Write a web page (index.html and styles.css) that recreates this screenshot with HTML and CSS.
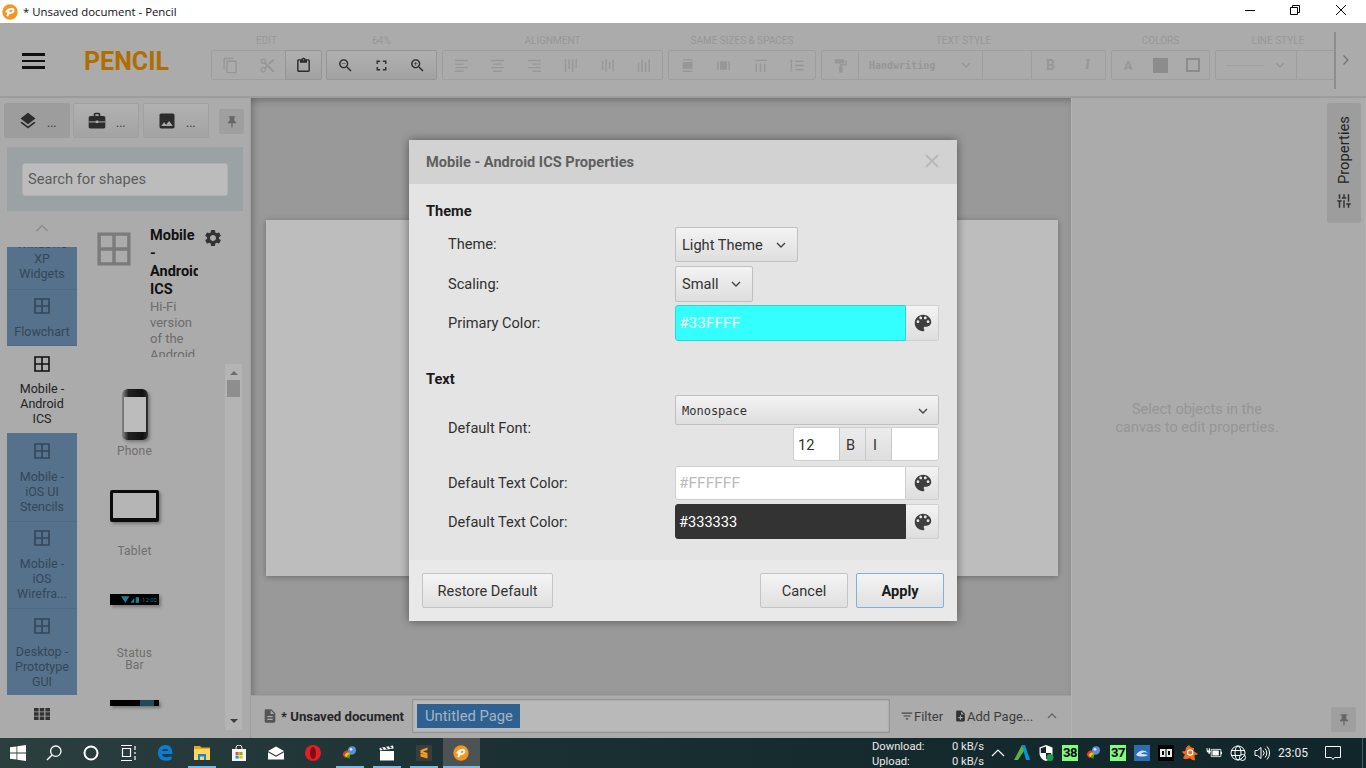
FILE: index.html
```html
<!DOCTYPE html>
<html lang="en">
<head>
<meta charset="utf-8">
<title>Pencil</title>
<link rel="stylesheet" href="styles.css">
</head>
<body>
<svg class="sprite" aria-hidden="true">
  <symbol id="i-copy" viewBox="0 0 24 24"><path d="M16 1H4c-1.1 0-2 .9-2 2v14h2V3h12V1zm3 4H8c-1.1 0-2 .9-2 2v14c0 1.1.9 2 2 2h11c1.1 0 2-.9 2-2V7c0-1.1-.9-2-2-2zm0 16H8V7h11v14z"/></symbol>
  <symbol id="i-cut" viewBox="0 0 24 24"><path d="M9.64 7.64c.23-.5.36-1.05.36-1.64 0-2.21-1.79-4-4-4S2 3.79 2 6s1.79 4 4 4c.59 0 1.14-.13 1.64-.36L10 12l-2.36 2.36C7.14 14.13 6.59 14 6 14c-2.21 0-4 1.79-4 4s1.79 4 4 4 4-1.79 4-4c0-.59-.13-1.14-.36-1.64L12 14l7 7h3v-1L9.64 7.64zM6 8c-1.1 0-2-.89-2-2s.9-2 2-2 2 .89 2 2-.9 2-2 2zm0 12c-1.1 0-2-.89-2-2s.9-2 2-2 2 .89 2 2-.9 2-2 2zm6-7.5c-.28 0-.5-.22-.5-.5s.22-.5.5-.5.5.22.5.5-.22.5-.5.5zM19 3l-6 6 2 2 7-7V3z"/></symbol>
  <symbol id="i-paste" viewBox="0 0 24 24"><path d="M19 3h-4.18C14.4 1.84 13.3 1 12 1c-1.3 0-2.4.84-2.82 2H5c-1.1 0-2 .9-2 2v14c0 1.1.9 2 2 2h14c1.1 0 2-.9 2-2V5c0-1.1-.9-2-2-2zm-7 0c.55 0 1 .45 1 1s-.45 1-1 1-1-.45-1-1 .45-1 1-1zm7 16H5V5h2v3h10V5h2v14z"/></symbol>
  <symbol id="i-zoomout" viewBox="0 0 24 24"><path d="M15.5 14h-.79l-.28-.27C15.41 12.59 16 11.11 16 9.5 16 5.91 13.09 3 9.5 3S3 5.91 3 9.5 5.91 16 9.5 16c1.61 0 3.09-.59 4.23-1.57l.27.28v.79l5 4.99L20.49 19l-4.99-5zm-6 0C7.01 14 5 11.99 5 9.5S7.01 5 9.5 5 14 7.01 14 9.5 11.99 14 9.5 14zM7 9h5v1H7z"/></symbol>
  <symbol id="i-zoomin" viewBox="0 0 24 24"><path d="M15.5 14h-.79l-.28-.27C15.41 12.59 16 11.11 16 9.5 16 5.91 13.09 3 9.5 3S3 5.91 3 9.5 5.91 16 9.5 16c1.61 0 3.09-.59 4.23-1.57l.27.28v.79l5 4.99L20.49 19l-4.99-5zm-6 0C7.01 14 5 11.99 5 9.5S7.01 5 9.5 5 14 7.01 14 9.5 11.99 14 9.5 14zM12 10h-2v2H9v-2H7V9h2V7h1v2h2v1z"/></symbol>
  <symbol id="i-fit" viewBox="0 0 24 24"><path d="M7 14H5v5h5v-2H7v-3zm-2-4h2V7h3V5H5v5zm12 7h-3v2h5v-5h-2v3zM14 5v2h3v3h2V5h-5z"/></symbol>
  <symbol id="i-layers" viewBox="0 0 24 24"><path d="M11.99 18.54l-7.37-5.73L3 14.07l9 7 9-7-1.63-1.27-7.38 5.74zM12 16l7.36-5.73L21 9l-9-7-9 7 1.63 1.27L12 16z"/></symbol>
  <symbol id="i-work" viewBox="0 0 24 24"><path d="M20 6h-4V4c0-1.11-.89-2-2-2h-4c-1.11 0-2 .89-2 2v2H4c-1.11 0-1.99.89-1.99 2L2 19c0 1.11.89 2 2 2h16c1.11 0 2-.89 2-2V8c0-1.11-.89-2-2-2zm-6 0h-4V4h4v2z"/><path d="M2 12.500h20v1.200H2z" fill="#b0b0b0"/><path d="M10.500 11.500h3v3h-3z" fill="#b0b0b0"/></symbol>
  <symbol id="i-image" viewBox="0 0 24 24"><path d="M21 19V5c0-1.100-.9-2-2-2H5c-1.100 0-2 .9-2 2v14c0 1.100.9 2 2 2h14c1.100 0 2-.9 2-2zM8.500 13.500l2.500 3.010L14.500 12l4.500 6H5l3.500-4.500z"/></symbol>
  <symbol id="i-pin" viewBox="0 0 24 24"><path d="M16 9V4h1c.55 0 1-.45 1-1s-.45-1-1-1H7c-.55 0-1 .45-1 1s.45 1 1 1h1v5c0 1.66-1.34 3-3 3v2h5.970v7l1 1 1-1v-7H19v-2c-1.660 0-3-1.340-3-3z"/></symbol>
  <symbol id="i-gear" viewBox="0 0 24 24"><path d="M19.14 12.94c.04-.3.06-.61.06-.94 0-.32-.02-.64-.07-.94l2.03-1.58c.18-.14.23-.41.12-.61l-1.92-3.32c-.12-.22-.37-.29-.59-.22l-2.39.96c-.5-.38-1.03-.7-1.62-.94l-.36-2.54c-.04-.24-.24-.41-.48-.41h-3.84c-.24 0-.43.17-.47.41l-.36 2.54c-.59.24-1.13.57-1.62.94l-2.39-.96c-.22-.08-.47 0-.59.22L2.74 8.87c-.12.21-.08.47.12.61l2.03 1.58c-.05.3-.09.63-.09.94s.02.64.07.94l-2.03 1.58c-.18.14-.23.41-.12.61l1.92 3.32c.12.22.37.29.59.22l2.39-.96c.5.38 1.03.7 1.62.94l.36 2.54c.05.24.24.41.48.41h3.84c.24 0 .44-.17.47-.41l.36-2.54c.59-.24 1.13-.56 1.62-.94l2.39.96c.22.08.47 0 .59-.22l1.92-3.32c.12-.22.07-.47-.12-.61l-2.01-1.58zM12 15.6c-1.98 0-3.6-1.62-3.6-3.6s1.62-3.6 3.6-3.6 3.6 1.62 3.6 3.6-1.62 3.6-3.6 3.6z"/></symbol>
  <symbol id="i-palette" viewBox="0 0 24 24"><path d="M12 3c-4.97 0-9 4.03-9 9s4.03 9 9 9c.83 0 1.5-.67 1.5-1.5 0-.39-.15-.74-.39-1.01-.23-.26-.38-.61-.38-.99 0-.83.67-1.5 1.5-1.5H16c2.76 0 5-2.24 5-5 0-4.42-4.03-8-9-8zm-5.500 9c-.83 0-1.5-.67-1.5-1.5S5.670 9 6.500 9 8 9.670 8 10.500 7.330 12 6.500 12zm3-4C8.670 8 8 7.330 8 6.500S8.670 5 9.500 5s1.500.67 1.500 1.500S10.330 8 9.500 8zm5 0c-.83 0-1.500-.67-1.500-1.500S13.670 5 14.500 5s1.500.67 1.500 1.500S15.330 8 14.500 8zm3 4c-.83 0-1.500-.67-1.500-1.500S16.670 9 17.500 9s1.500.67 1.500 1.500-.67 1.500-1.500 1.500z"/></symbol>
  <symbol id="i-tune" viewBox="0 0 24 24"><path d="M3 17v2h6v-2H3zM3 5v2h10V5H3zm10 16v-2h8v-2h-8v-2h-2v6h2zM7 9v2H3v2h4v2h2V9H7zm14 4v-2H11v2h10zm-6-4h2V7h4V5h-4V3h-2v6z"/></symbol>
  <symbol id="i-doc" viewBox="0 0 24 24"><path d="M14 2H6c-1.100 0-1.990.9-1.990 2L4 20c0 1.100.89 2 1.990 2H18c1.100 0 2-.9 2-2V8l-6-6zm2 16H8v-2h8v2zm0-4H8v-2h8v2zm-3-5V3.500L18.500 9H13z"/></symbol>
  <symbol id="i-addpage" viewBox="0 0 24 24"><path d="M14 2H6c-1.100 0-1.990.9-1.990 2L4 20c0 1.100.89 2 1.990 2H18c1.100 0 2-.9 2-2V8l-6-6zm2 14h-3v3h-2v-3H8v-2h3v-3h2v3h3v2zm-3-7V3.500L18.500 9H13z"/></symbol>
  <symbol id="i-filter" viewBox="0 0 24 24"><path d="M10 18h4v-2h-4v2zM3 6v2h18V6H3zm3 7h12v-2H6v2z"/></symbol>
  <symbol id="i-chev" viewBox="0 0 12 12"><path d="M2 4l4 4 4-4" fill="none" stroke="currentColor" stroke-width="1.400"/></symbol>
  <symbol id="i-cat" viewBox="0 0 16 16"><path d="M1 1h14v14H1zM8 1v14M1 8h14" fill="none" stroke="currentColor" stroke-width="1.600"/></symbol>
  <symbol id="i-left" viewBox="0 0 24 24"><path d="M3 4h18v2H3zM3 9h12v2H3zM3 14h18v2H3zM3 19h12v2H3z"/></symbol>
  <symbol id="i-center" viewBox="0 0 24 24"><path d="M3 4h18v2H3zM6 9h12v2H6zM3 14h18v2H3zM6 19h12v2H6z"/></symbol>
  <symbol id="i-right" viewBox="0 0 24 24"><path d="M3 4h18v2H3zM9 9h12v2H9zM3 14h18v2H3zM9 19h12v2H9z"/></symbol>
  <symbol id="i-vt" viewBox="0 0 24 24"><path d="M4 3h2v18H4zM9 3h2v14H9zM14 3h2v18h-2zM19 3h2v13h-2z"/></symbol>
  <symbol id="i-vm" viewBox="0 0 24 24"><path d="M4 6h2v12H4zM9 3h2v18H9zM14 7h2v10h-2zM19 4h2v16h-2z"/></symbol>
  <symbol id="i-vb" viewBox="0 0 24 24"><path d="M4 8h2v13H4zM9 3h2v18H9zM14 7h2v14h-2zM19 3h2v18h-2z"/></symbol>
  <symbol id="i-samew" viewBox="0 0 24 24"><path d="M5 3h14v2H5zM5 7h14v10H5zM5 19h14v2H5z"/></symbol>
  <symbol id="i-sameh" viewBox="0 0 24 24"><path d="M3 6h2v12H3zM7 6h10v12H7zM19 6h2v12h-2z"/></symbol>
  <symbol id="i-hspace" viewBox="0 0 24 24"><path d="M3 4h18v1.600H3zM5 9h2v12H5zM11 9h2v12h-2zM17 9h2v12h-2zM5 3l-2 1.800L5 6.600zM19 3l2 1.800-2 1.800z"/></symbol>
  <symbol id="i-vspace" viewBox="0 0 24 24"><path d="M4 5h1.600v14H4zM2.500 6l2.300-3 2.300 3zM2.500 18l2.300 3 2.300-3zM10 5h12v2H10zM10 11h12v2H10zM10 17h12v2H10z"/></symbol>
  <symbol id="i-roller" viewBox="0 0 24 24"><path d="M4 3h13v6H4zM18 5h3v7h-8v2h2v8h-5v-8h1v-4h8V7h-1z"/></symbol>
  <symbol id="i-apps" viewBox="0 0 16 12"><path d="M0 0h4.600v3.400H0zM5.700 0h4.600v3.400H5.700zM11.400 0H16v3.400h-4.600zM0 4.300h4.600v3.400H0zM5.700 4.300h4.600v3.400H5.700zM11.400 4.300H16v3.400h-4.600zM0 8.600h4.600V12H0zM5.700 8.600h4.600V12H5.700zM11.400 8.600H16V12h-4.600z"/></symbol>
  <symbol id="i-pencil" viewBox="0 0 24 24"><circle cx="12" cy="12" r="11.500" fill="#f7941d"/><path d="M6 12.500C8 8 15 5.500 17 8.500c1.500 2.500-2.500 6-7 5M10.500 9.500L8 18.500" fill="none" stroke="#fff" stroke-width="3"/></symbol>
  <symbol id="i-idm" viewBox="0 0 24 24"><path d="M1 15c1-5 4-7 8-7l1 6-5 6z" fill="#e23b2e"/><path d="M4 16c1-4 3-5 7-5l2 3-5 5z" fill="#f5c400"/><path d="M7 17c2-3 6-4 11-3l-6 1-1 6z" fill="#3da935"/><circle cx="15" cy="8" r="6" fill="#5b8fd8"/><circle cx="13.500" cy="6.500" r="2" fill="#dce9f8"/></symbol>
</svg>

<div class="titlebar">
  <svg class="title-logo"><use href="#i-pencil"/></svg>
  <span class="title-text">* Unsaved document - Pencil</span>
  <div class="win-controls">
    <svg class="win-btn" viewBox="0 0 46 23"><path d="M20 10.500h10" stroke="#000" stroke-width="1"/></svg>
    <svg class="win-btn" viewBox="0 0 46 23"><path d="M19.500 7.500h7v7h-7zM21.500 7.500v-2h7v7h-2" fill="none" stroke="#000"/></svg>
    <svg class="win-btn" viewBox="0 0 46 23"><path d="M19 5l10 10M29 5l-10 10" stroke="#000" stroke-width="1"/></svg>
  </div>
</div>

<div class="app">
  <header class="toolbar">
    <div class="brand">
      <div class="burger"><i></i><i></i><i></i></div>
      <div class="logo-word">PENCIL</div>
    </div>
    <div class="tool-scroll">
      <section class="tg w110">
        <div class="tg-label">EDIT</div>
        <div class="tg-cells">
          <div class="cell"><svg class="ic"><use href="#i-copy"/></svg></div>
          <div class="cell"><svg class="ic"><use href="#i-cut"/></svg></div>
          <div class="cell cell-on"><svg class="ic"><use href="#i-paste"/></svg></div>
        </div>
      </section>
      <section class="tg w111">
        <div class="tg-label">64%</div>
        <div class="tg-cells on">
          <div class="cell"><svg class="ic"><use href="#i-zoomout"/></svg></div>
          <div class="cell"><svg class="ic"><use href="#i-fit"/></svg></div>
          <div class="cell"><svg class="ic"><use href="#i-zoomin"/></svg></div>
        </div>
      </section>
      <section class="tg w221">
        <div class="tg-label">ALIGNMENT</div>
        <div class="tg-cells">
          <div class="cell"><svg class="ic"><use href="#i-left"/></svg></div>
          <div class="cell"><svg class="ic"><use href="#i-center"/></svg></div>
          <div class="cell"><svg class="ic"><use href="#i-right"/></svg></div>
          <div class="cell"><svg class="ic"><use href="#i-vt"/></svg></div>
          <div class="cell"><svg class="ic"><use href="#i-vm"/></svg></div>
          <div class="cell"><svg class="ic"><use href="#i-vb"/></svg></div>
        </div>
      </section>
      <section class="tg w148">
        <div class="tg-label">SAME SIZES &amp; SPACES</div>
        <div class="tg-cells">
          <div class="cell"><svg class="ic"><use href="#i-samew"/></svg></div>
          <div class="cell"><svg class="ic"><use href="#i-sameh"/></svg></div>
          <div class="cell"><svg class="ic"><use href="#i-hspace"/></svg></div>
          <div class="cell"><svg class="ic"><use href="#i-vspace"/></svg></div>
        </div>
      </section>
      <section class="tg w285">
        <div class="tg-label">TEXT STYLE</div>
        <div class="tg-cells">
          <div class="cell fix37 div-r"><svg class="ic"><use href="#i-roller"/></svg></div>
          <div class="cell fix124 div-r font-pick"><span class="hand">Handwriting</span><svg class="chev"><use href="#i-chev"/></svg></div>
          <div class="cell fix49 div-r"></div>
          <div class="cell fix37 glyph-b">B</div>
          <div class="cell fix37 glyph-i">I</div>
        </div>
      </section>
      <section class="tg w99">
        <div class="tg-label">COLORS</div>
        <div class="tg-cells">
          <div class="cell glyph-a">A</div>
          <div class="cell"><span class="fill-sq"></span></div>
          <div class="cell"><span class="line-sq"></span></div>
        </div>
      </section>
      <section class="tg w130">
        <div class="tg-label label-line">LINE STYLE</div>
        <div class="tg-cells">
          <div class="cell fix81 div-r line-pick"><span class="line-sample"></span><svg class="chev"><use href="#i-chev"/></svg></div>
          <div class="cell"></div>
        </div>
      </section>
    </div>
    <div class="tool-more"><svg class="more-chev" viewBox="0 0 10 12"><path d="M2.500 1.500l4.500 4.500-4.500 4.500" fill="none" stroke="#707070" stroke-width="1.200"/></svg></div>
  </header>

  <div class="workspace">
    <aside class="left">
      <div class="left-tabs">
        <div class="ltab ltab-on"><svg class="ltab-ic"><use href="#i-layers"/></svg><span>...</span></div>
        <div class="ltab"><svg class="ltab-ic"><use href="#i-work"/></svg><span>...</span></div>
        <div class="ltab ltab3"><svg class="ltab-ic"><use href="#i-image"/></svg><span>...</span></div>
        <div class="pin-btn"><svg class="pin-ic"><use href="#i-pin"/></svg></div>
      </div>
      <div class="search-wrap"><div class="search-box">Search for shapes</div></div>
      <div class="collections">
        <div class="cat-col">
          <div class="cat-up"><svg class="cat-up-ic" viewBox="0 0 14 8"><path d="M1.500 7l5.500-5.500 5.500 5.500" fill="none" stroke="#8a8a8a" stroke-width="1.200"/></svg></div>
          <div class="cat-list">
            <div class="cat cat-clip">Windows<br>XP<br>Widgets</div>
            <div class="cat cat-flow"><svg class="cat-ic"><use href="#i-cat"/></svg><span>Flowchart</span></div>
            <div class="cat cat-sel"><svg class="cat-ic"><use href="#i-cat"/></svg><span>Mobile -<br>Android<br>ICS</span></div>
            <div class="cat cat-ios"><svg class="cat-ic"><use href="#i-cat"/></svg><span>Mobile -<br>iOS UI<br>Stencils</span></div>
            <div class="cat cat-wire"><svg class="cat-ic"><use href="#i-cat"/></svg><span>Mobile -<br>iOS<br>Wirefra...</span></div>
            <div class="cat cat-desk"><svg class="cat-ic"><use href="#i-cat"/></svg><span>Desktop -<br>Prototype<br>GUI</span></div>
          </div>
          <div class="cat-foot"><svg class="apps-ic"><use href="#i-apps"/></svg></div>
        </div>
        <div class="shape-col">
          <div class="col-head">
            <svg class="head-ic"><use href="#i-cat"/></svg>
            <div class="head-text">
              <div class="head-title">Mobile - Android ICS</div>
              <div class="head-desc">Hi-Fi version of the Android ICS</div>
            </div>
            <svg class="gear"><use href="#i-gear"/></svg>
          </div>
          <div class="shapes">
            <div class="shape-list">
              <div class="shape s-phone"><div class="phone"><div class="phone-screen"></div></div><div class="shape-name">Phone</div></div>
              <div class="shape s-tablet"><div class="tablet"></div><div class="shape-name">Tablet</div></div>
              <div class="shape s-status">
                <div class="statusbar">
                  <svg class="sb-icons" viewBox="0 0 20 7"><path fill="#1f7f92" d="M0 0h9L4.500 7zM10 7l4-5v5zM15.500 1H19v6h-3.500z"/></svg>
                  <span class="sb-time">12:00</span>
                </div>
                <div class="shape-name">Status<br>Bar</div>
              </div>
              <div class="shape s-nav"><div class="navbar"><span class="nav-seg"></span></div></div>
            </div>
            <div class="scrollbar">
              <span class="sb-up"></span>
              <span class="sb-thumb"></span>
              <span class="sb-down"></span>
            </div>
          </div>
        </div>
      </div>
    </aside>

    <main class="center">
      <div class="canvas-area"><div class="page"></div></div>
      <div class="page-bar">
        <svg class="doc-ic"><use href="#i-doc"/></svg>
        <span class="doc-name">* Unsaved document</span>
        <div class="page-tabs"><span class="page-tab">Untitled Page</span></div>
        <div class="page-act filter"><svg class="act-ic"><use href="#i-filter"/></svg>Filter</div>
        <div class="page-act addp"><svg class="act-ic2"><use href="#i-addpage"/></svg>Add Page...</div>
        <svg class="bar-chev" viewBox="0 0 12 8"><path d="M2 6l4-4 4 4" fill="none" stroke="#666" stroke-width="1.300"/></svg>
      </div>
    </main>

    <aside class="right">
      <div class="right-main"><p class="right-msg">Select objects in the canvas to edit properties.</p></div>
      <div class="right-rail">
        <div class="prop-tab"><span class="prop-text">Properties</span><svg class="tune"><use href="#i-tune"/></svg></div>
        <div class="pin-btn pin-rail"><svg class="pin-ic"><use href="#i-pin"/></svg></div>
      </div>
    </aside>
  </div>
</div>

<footer class="taskbar">
  <div class="tb-apps">
    <div class="tb first"><svg class="tb-ic" viewBox="0 0 16 16"><path fill="#fff" d="M0 2.300l6.500-.9v6.200H0zM7.300 1.300L16 0v7.600H7.300zM0 8.400h6.500v6.200L0 13.700zM7.300 8.400H16V16l-8.700-1.200z"/></svg></div>
    <div class="tb"><svg class="tb-ic" viewBox="0 0 16 16"><circle cx="9.800" cy="6.200" r="5.200" fill="none" stroke="#fff" stroke-width="1.300"/><path d="M6 10L1 15" stroke="#fff" stroke-width="1.500"/></svg></div>
    <div class="tb"><svg class="tb-ic" viewBox="0 0 16 16"><circle cx="8" cy="8" r="6.500" fill="none" stroke="#fff" stroke-width="2"/></svg></div>
    <div class="tb"><svg class="tb-ic" viewBox="0 0 16 16"><path d="M1 .5h11M1 15.500h11M2.500 3.500h8v8h-8zM15 1v4M15 7v2M15 11v4" fill="none" stroke="#fff" stroke-width="1.200"/></svg></div>
    <div class="tb"><svg class="tb-ic" viewBox="0 0 16 16"><path fill="#0c7cd5" d="M1 8c0-5 3-8 7.500-8C13 0 15.500 3 15.500 9H5c.2 3.500 5 4.200 9.500 2v3.500C9 17 1 16 1 8zm4-2h6.300C11 3 6 3 5 6z"/></svg></div>
    <div class="tb act"><svg class="tb-ic" viewBox="0 0 16 16"><path fill="#e8a917" d="M0 1h6l1.500 1.500H16V5H0z"/><path fill="#ffd767" d="M0 4h16v11H0z"/><path fill="#1a86c9" d="M4 9h8v6h-2v-3.500H6V15H4z"/></svg></div>
    <div class="tb"><svg class="tb-ic" viewBox="0 0 16 16"><path fill="#f4f4f4" d="M1 4h14v12H1z"/><path d="M5 5V3a3 3 0 016 0v2" fill="none" stroke="#f4f4f4"/><path fill="#f25022" d="M4.500 7H7.700v3H4.500z"/><path fill="#7fba00" d="M8.300 7h3.200v3H8.300z"/><path fill="#00a4ef" d="M4.500 10.600H7.700v3H4.500z"/><path fill="#ffb900" d="M8.300 10.600h3.200v3H8.300z"/></svg></div>
    <div class="tb"><svg class="tb-ic" viewBox="0 0 16 16"><path fill="#fff" d="M0 6l8-4.500L16 6 8 10.500zM0 7.300l8 4.500 8-4.500V14.500H0z"/></svg></div>
    <div class="tb"><svg class="tb-ic" viewBox="0 0 16 16"><ellipse cx="8" cy="8" rx="8" ry="8" fill="#e21f26"/><ellipse cx="8" cy="8" rx="3" ry="6" fill="#7c0f14"/></svg></div>
    <div class="tb act"><svg class="tb-ic"><use href="#i-idm"/></svg></div>
    <div class="tb act"><svg class="tb-ic" viewBox="0 0 16 16"><path fill="#fff" d="M1 6h14v9.500H1z"/><path fill="#fff" d="M.5 3L14 .5l.6 3L1 5.500z"/><path fill="#223" d="M3 2.500l2 2-1.500.3-2-2zM7 1.800l2 2-1.500.3-2-2zM11 1.100l2 2-1.500.3-2-2z"/></svg></div>
    <div class="tb act"><svg class="tb-ic" viewBox="0 0 16 16"><rect width="16" height="16" fill="#3c3c3c"/><path fill="#f89c1c" d="M11.500 2.500L4.500 5v3l7 2.500V8l-4.500-1.500 4.500-1.500zM4.500 8.500v3l7 2v-3z"/></svg></div>
    <div class="tb act current"><svg class="tb-ic"><use href="#i-pencil"/></svg></div>
  </div>
  <div class="netstat">
    <div class="net-row"><span>Download:</span><span>0 kB/s</span></div>
    <div class="net-row"><span>Upload:</span><span>0 kB/s</span></div>
  </div>
  <div class="tray">
    <div class="tr"><svg class="tr-ic" viewBox="0 0 16 16"><path d="M2 11l6-6 6 6" fill="none" stroke="#fff" stroke-width="1.200"/></svg></div>
    <div class="tr"><svg class="tr-ic" viewBox="0 0 16 16"><path fill="#0696d7" d="M8 0h3l5 15h-4z"/><path fill="#5bae4a" d="M8 0L0 15h4l6-9z"/></svg></div>
    <div class="tr"><svg class="tr-ic" viewBox="0 0 16 16"><path fill="#fff" d="M8 0l6.500 2.500V8c0 4-3 7-6.500 8C4.500 15 1.500 12 1.500 8V2.500z"/><path fill="#18222a" d="M8 1.500V8H2.800V3.300zM8 8h5.200c0 3-2.200 5.300-5.200 6.300z"/><circle cx="12" cy="12.500" r="3.500" fill="#1f9b4f"/></svg></div>
    <div class="tr"><span class="num">38</span></div>
    <div class="tr"><svg class="tr-ic"><use href="#i-idm"/></svg></div>
    <div class="tr"><span class="num">37</span></div>
    <div class="tr"><svg class="tr-ic" viewBox="0 0 16 16"><rect width="16" height="16" fill="#2d6cb0"/><path d="M2 10c3-5 8-6 12-2-3-1-5-1-7 1 3 0 5 0 7 1-3 2-9 2-12 0z" fill="#cfe2f5"/></svg></div>
    <div class="tr"><svg class="tr-ic" viewBox="0 0 16 16"><rect width="16" height="16" fill="#000"/><path fill="#e8e8e8" d="M2 4h5.500v8H2zM8.500 4H14v8H8.500z"/><path fill="#000" d="M4 6h2v4H4zM10 6h2v4h-2z"/></svg></div>
    <div class="tr"><svg class="tr-ic" viewBox="0 0 16 16"><path fill="#f26a1b" d="M7 0c1 2 3 3 5 3 0 1 0 2-.5 3L16 9c-1 1-2.500 1-3.500 1L13 15c-2 1-4-.5-5-2-1.500 1-5 2-7 0l2-3.500C2 9 .5 8 0 6.500L3.500 6C3 3 5 1 7 0z"/><circle cx="8.200" cy="7.500" r="2.600" fill="none" stroke="#fff" stroke-width="1.200"/></svg></div>
    <div class="tr"><svg class="tr-ic" viewBox="0 0 20 16"><path d="M6.500 3.500h12v9h-12z" fill="none" stroke="#fff"/><path fill="#fff" d="M8 5h8v6H8zM.5 2h1.500v3h1.500V2H5v3l1 1v1H5v2H3V7H1V5.500zM18.500 6.500h1.500v3h-1.500z"/></svg></div>
    <div class="tr"><svg class="tr-ic" viewBox="0 0 16 16"><circle cx="8" cy="8" r="7" fill="none" stroke="#fff"/><ellipse cx="8" cy="8" rx="3" ry="7" fill="none" stroke="#fff"/><path d="M1 5.500h14M1 10.500h14" stroke="#fff"/><circle cx="12.500" cy="12.500" r="3" fill="#1a2e30" stroke="#fff"/><path d="M10.500 14.500l4-4" stroke="#fff"/></svg></div>
    <div class="tr"><svg class="tr-ic" viewBox="0 0 16 16"><path d="M1 5.500h2.500L7 2.500v11l-3.500-3H1z" fill="none" stroke="#fff"/><path d="M9 5.500a3.500 3.500 0 010 5M11 3.500a6.500 6.500 0 010 9M13 1.500a9.500 9.500 0 010 13" fill="none" stroke="#fff"/></svg></div>
    <div class="clock">23:05</div>
    <div class="notif"><svg class="notif-ic" viewBox="0 0 16 16"><path d="M.5 1.500h15v11H9.500l-1.500 2-1.500-2h-6z" fill="none" stroke="#fff"/></svg></div>
    <div class="show-desk"></div>
  </div>
</footer>

<div class="dialog">
  <div class="dlg-head">
    <span class="dlg-title">Mobile - Android ICS Properties</span>
    <svg class="dlg-close" viewBox="0 0 14 14"><path d="M1 1l12 12M13 1L1 13" stroke="#b8b8b8" stroke-width="2"/></svg>
  </div>
  <div class="dlg-body">
    <h3 class="sec">Theme</h3>
    <div class="row r-theme"><label>Theme:</label><div class="select s123"><span>Light Theme</span><svg class="chev-d"><use href="#i-chev"/></svg></div></div>
    <div class="row r-scale"><label>Scaling:</label><div class="select s78"><span>Small</span><svg class="chev-d"><use href="#i-chev"/></svg></div></div>
    <div class="row r-prim"><label>Primary Color:</label>
      <div class="color"><div class="color-val c-cyan">#33FFFF</div><div class="color-btn"><svg class="pal"><use href="#i-palette"/></svg></div></div>
    </div>
    <h3 class="sec sec2">Text</h3>
    <div class="row r-font"><label>Default Font:</label>
      <div class="font-ctl">
        <div class="select full mono"><span>Monospace</span><svg class="chev-d"><use href="#i-chev"/></svg></div>
        <div class="font-meta">
          <div class="fm-size">12</div>
          <div class="fm-btn fm-b">B</div>
          <div class="fm-btn fm-i">I</div>
          <div class="fm-blank"></div>
        </div>
      </div>
    </div>
    <div class="row r-c1"><label>Default Text Color:</label>
      <div class="color"><div class="color-val c-white">#FFFFFF</div><div class="color-btn"><svg class="pal"><use href="#i-palette"/></svg></div></div>
    </div>
    <div class="row r-c2"><label>Default Text Color:</label>
      <div class="color"><div class="color-val c-dark">#333333</div><div class="color-btn"><svg class="pal"><use href="#i-palette"/></svg></div></div>
    </div>
  </div>
  <div class="dlg-foot">
    <button class="btn b-restore">Restore Default</button>
    <span class="foot-gap"></span>
    <button class="btn b-cancel">Cancel</button>
    <button class="btn b-apply">Apply</button>
  </div>
</div>
</body>
</html>
```
FILE: styles.css
```css
* { box-sizing: border-box; }
html, body { margin: 0; padding: 0; width: 1366px; height: 768px; overflow: hidden; }
body { display: flex; flex-direction: column; font-family: Roboto, "Liberation Sans", sans-serif; color: #222; background: #ababab; position: relative; }
.sprite { display: none; }

.titlebar { height: 23px; flex: none; background: #fff; display: flex; align-items: center; }
.title-logo { width: 16px; height: 16px; margin-left: 2px; margin-right: 5px; }
.title-text { font: 11.400px "Open Sans", "Noto Sans", sans-serif; color: #111; }
.win-controls { margin-left: auto; margin-right: 3px; display: flex; }
.win-btn { width: 46px; height: 23px; }

.app { flex: 1; min-height: 0; display: flex; flex-direction: column; }
.toolbar { height: 75px; flex: none; background: #ababab; border-bottom: 2px solid #9c9c9c; display: flex; }
.brand { width: 211px; flex: none; display: flex; align-items: center; padding-top: 3px; }
.burger { width: 23px; margin-left: 22px; display: flex; flex-direction: column; gap: 4px; }
.burger i { display: block; height: 2.500px; background: #111; }
.logo-word { margin-left: 39px; font-size: 25px; font-weight: 700; color: #b06d00; }
.tool-scroll { width: 1124px; flex: none; display: flex; gap: 5px; overflow: hidden; }
.tg { flex: none; display: flex; flex-direction: column; padding-top: 12px; }
.w110 { width: 111px; margin-right: -1px; }
.w111 { width: 111px; }
.w221 { width: 221px; }
.w148 { width: 148px; }
.w285 { width: 285px; }
.w99 { width: 99px; }
.w130 { width: 130px; }
.tg-label { height: 12px; line-height: 12px; font-size: 10px; text-align: center; color: #979797; white-space: nowrap; }
.label-line { padding-right: 4px; }
.tg-cells { margin-top: 3px; height: 30px; display: flex; border: 1px solid #9e9e9e; border-radius: 2px; }
.tg-cells.on { background: linear-gradient(#b0b0b0, #a2a2a2); border-color: #959595; }
.tg-cells.on .ic { fill: #2e2e2e; }
.cell { flex: 1 1 0; min-width: 0; display: flex; align-items: center; justify-content: center; color: #979797; }
.cell-on { flex: 0 0 37px; border: 1px solid #959595; margin: -1px; background: linear-gradient(#b0b0b0, #a2a2a2); border-radius: 0 2px 2px 0; }
.cell-on .ic { fill: #2b2b2b; }
.ic { width: 17px; height: 17px; fill: #979797; }
.fix37 { flex: 0 0 37px; }
.fix49 { flex: 0 0 49px; }
.fix81 { flex: 0 0 81px; }
.fix124 { flex: 0 0 124px; }
.div-r { border-right: 1px solid #9e9e9e; }
.font-pick { justify-content: space-between; padding: 0 10px; }
.hand { font: bold 10px "DejaVu Sans Mono", monospace; color: #969696; }
.chev { width: 12px; height: 12px; color: #979797; }
.glyph-b { font-size: 14px; font-weight: 700; }
.glyph-i { font: italic 700 14px "Liberation Serif", serif; }
.glyph-a { font-size: 13px; font-weight: 700; }
.fill-sq { width: 15px; height: 15px; background: #8c8c8c; }
.line-sq { width: 14px; height: 14px; border: 2px solid #8c8c8c; }
.line-pick { justify-content: space-between; padding: 0 10px; }
.line-sample { width: 38px; height: 1px; background: #a0a0a0; }
.tool-more { flex: 1; position: relative; display: flex; align-items: center; justify-content: center; padding-right: 10px; }
.more-chev { width: 10px; height: 12px; }
.tool-more::before { content: ""; position: absolute; left: -1px; top: 9px; height: 57px; width: 2px; background: #8e8e8e; }

.workspace { flex: 1; min-height: 0; display: flex; }
.left { width: 251px; flex: none; background: #ababab; border-right: 1px solid #9f9f9f; display: flex; flex-direction: column; }
.left-tabs { height: 49px; flex: none; padding: 5px 0 0 4px; display: flex; gap: 3px; align-items: flex-start; }
.ltab { width: 66px; height: 35px; border: 1px solid #a0a0a0; border-radius: 2px; background: linear-gradient(#b1b1b1, #a3a3a3); display: flex; align-items: center; padding-left: 13px; font-size: 12px; color: #333; }
.ltab3 { margin-left: 1px; }
.ltab span { margin-left: 9px; margin-top: 4px; }
.ltab-ic { width: 20px; height: 20px; fill: #2c2c2c; }
.ltab-on { background: #9d9d9d; border-color: #9d9d9d; }
.pin-btn { width: 25px; height: 25px; background: #9f9f9f; border-radius: 2px; display: flex; align-items: center; justify-content: center; }
.left-tabs .pin-btn { margin: 6px 0 0 7px; }
.pin-ic { width: 14px; height: 16px; fill: #666; }
.search-wrap { margin: 0 7px; height: 64px; flex: none; background: #9aa2a4; padding: 16px 15px; }
.search-box { height: 33px; background: #bcbcbc; border: 1px solid #b0b0b0; border-radius: 3px; padding-left: 5px; font-size: 14.700px; line-height: 30px; color: #5c5c5c; }
.collections { flex: 1; min-height: 0; display: flex; }
.cat-col { width: 77px; flex: none; padding-left: 7px; display: flex; flex-direction: column; }
.cat-up { height: 36px; flex: none; display: flex; justify-content: center; padding-top: 13px; }
.cat-up-ic { width: 14px; height: 8px; }
.cat-list { flex: none; height: 448px; overflow: hidden; display: flex; flex-direction: column; }
.cat { flex: none; background: #56718b; color: #33475a; font-size: 12.500px; line-height: 15px; text-align: center; display: flex; flex-direction: column; align-items: center; justify-content: flex-end; white-space: nowrap; border-bottom: 1px solid #506a83; }
.cat-ic { width: 16px; height: 16px; color: #33475a; margin-bottom: 10px; }
.cat-clip { height: 43px; padding-bottom: 8px; }
.cat-flow { height: 56px; padding-bottom: 6px; }
.cat-sel { height: 87px; padding-bottom: 7px; background: #ababab; color: #222; border-bottom: 0; }
.cat-sel .cat-ic { color: #111; margin-bottom: 9px; }
.cat-ios { height: 89px; padding-bottom: 7px; }
.cat-wire { height: 87px; padding-bottom: 7px; }
.cat-desk { height: 86px; padding-bottom: 6px; border-bottom: 0; }
.cat-foot { flex: 1; display: flex; align-items: center; justify-content: center; padding-bottom: 5px; }
.apps-ic { width: 16px; height: 12px; fill: #333; }
.shape-col { flex: 1; min-width: 0; display: flex; flex-direction: column; }
.col-head { height: 146px; flex: none; position: relative; display: flex; padding: 10px 0 0 20px; overflow: hidden; }
.head-ic { width: 34px; height: 34px; color: #7b7b7b; flex: none; margin-top: 11px; }
.head-text { width: 48px; margin-left: 19px; height: 136px; overflow: hidden; }
.head-title { font-size: 14.500px; font-weight: 700; line-height: 18px; color: #111; height: 72px; margin-top: 6px; }
.head-desc { font-size: 13px; line-height: 16px; color: #6c6c6c; }
.gear { position: absolute; left: 126px; top: 17px; width: 20px; height: 20px; fill: #333; }
.shapes { flex: 1; min-height: 0; display: flex; padding: 7px 8px 8px 0; }
.shape-list { flex: 1; min-width: 0; height: 100%; overflow: hidden; padding-right: 33px; display: flex; flex-direction: column; }
.shape { display: flex; flex-direction: column; align-items: center; flex: none; }
.shape-name { font-size: 12px; line-height: 12px; color: #6e6e6e; text-align: center; letter-spacing: .2px; }
.s-phone { padding-top: 25px; }
.s-phone .shape-name { margin-top: 5px; }
.s-tablet { margin-top: 33px; }
.s-tablet .shape-name { margin-top: 23px; }
.s-status { margin-top: 37px; }
.s-status .shape-name { margin-top: 42px; }
.s-nav { margin-top: 29px; }
.phone { width: 26px; height: 51px; border-radius: 6px 6px 5px 5px; background: linear-gradient(90deg, #8a8a8a, #222 25%, #111 80%, #333); padding: 8px 2px 8px 2px; box-shadow: 2px 2px 3px rgba(0,0,0,.3); }
.phone-screen { height: 100%; background: #bcbcbc; }
.tablet { width: 49px; height: 32px; background: #b5b5b5; border: 3px solid #0b0b0b; border-bottom-width: 4px; border-radius: 2px; box-shadow: 2px 2px 3px rgba(0,0,0,.3); }
.statusbar { width: 49px; height: 11px; background: #000; display: flex; align-items: center; justify-content: flex-end; gap: 2px; padding-right: 2px; box-shadow: 2px 2px 3px rgba(0,0,0,.3); }
.sb-icons { width: 19px; height: 7px; }
.sb-time { font-size: 6px; line-height: 7px; color: #1e7385; }
.navbar { width: 49px; height: 6px; background: #000; display: flex; justify-content: flex-end; padding-right: 5px; box-shadow: 2px 2px 3px rgba(0,0,0,.3); }
.nav-seg { width: 14px; background: #1f4a5c; }
.scrollbar { width: 17px; flex: none; background: #b4b4b4; display: flex; flex-direction: column; align-items: center; }
.sb-up { width: 0; height: 0; margin-top: 7px; border: 4px solid transparent; border-top: 0; border-bottom: 4px solid #6d6d6d; }
.sb-thumb { width: 13px; height: 17px; background: #8e8e8e; margin-top: 5px; }
.sb-down { width: 0; height: 0; margin-top: auto; margin-bottom: 7px; border: 4px solid transparent; border-bottom: 0; border-top: 4px solid #3d3d3d; }

.center { width: 820px; flex: none; display: flex; flex-direction: column; min-height: 0; }
.canvas-area { flex: 1; min-height: 0; background: #999; box-shadow: inset 0 6px 8px -4px rgba(0,0,0,.25), inset 6px 0 8px -4px rgba(0,0,0,.2); padding: 122px 0 0 15px; }
.page { width: 792px; height: 356px; background: #bdbdbd; box-shadow: 0 1px 6px rgba(0,0,0,.3); }
.page-bar { height: 43px; flex: none; background: #ababab; border-top: 1px solid #a0a0a0; display: flex; align-items: center; padding-bottom: 2px; }
.doc-ic { width: 16px; height: 16px; fill: #555; margin-left: 11px; }
.doc-name { width: 123px; font-size: 13.200px; font-weight: 700; color: #262626; margin-left: 3px; white-space: nowrap; }
.page-tabs { width: 478px; height: 34px; margin-left: 8px; background: #b9b9b9; border: 1px solid #959595; padding: 4px; flex: none; display: flex; box-shadow: inset 0 0 2px rgba(0,0,0,.2); }
.page-tab { background: #2f6190; color: #a4b4c4; font-size: 14.800px; line-height: 24px; padding: 0 7px 0 8px; }
.page-act { display: flex; align-items: center; color: #3d3d3d; font-size: 13px; white-space: nowrap; }
.filter { margin-left: 10px; }
.addp { margin-left: 11px; }
.act-ic { width: 14px; height: 14px; fill: #444; }
.act-ic2 { width: 13px; height: 14px; fill: #333; }
.bar-chev { width: 12px; height: 8px; margin-left: 13px; }

.right { flex: 1; min-width: 0; display: flex; background: #ababab; border-left: 1px solid #b4b4b4; }
.right-main { flex: 1; display: flex; align-items: center; justify-content: center; padding: 2px 5px 0 0; }
.right-msg { margin: 0; width: 170px; font-size: 14.500px; line-height: 18px; text-align: center; color: #959595; }
.right-rail { width: 39px; flex: none; display: flex; flex-direction: column; align-items: center; padding: 5px 5px 6px 0; border-right: 1px solid #b0b0b0; }
.prop-tab { width: 34px; height: 120px; background: #9d9d9d; border-radius: 2px; display: flex; flex-direction: column; align-items: center; padding-top: 13px; }
.prop-text { writing-mode: vertical-rl; transform: rotate(180deg); font-size: 14.800px; line-height: 18px; color: #222; }
.tune { width: 18px; height: 18px; fill: #333; margin-top: 8px; transform: rotate(90deg); }
.pin-rail { margin-top: auto; }

.taskbar { height: 30px; flex: none; background: linear-gradient(90deg, #2b3f3f 0%, #1c3133 35%, #142a2d 65%, #10262a 100%); display: flex; align-items: center; color: #e8e8e8; }
.tb-apps { display: flex; height: 30px; }
.tb { width: 37px; height: 30px; display: flex; align-items: center; justify-content: center; position: relative; }
.first { width: 35.500px; }
.tb-ic { width: 16px; height: 16px; }
.tb.act::after { content: ""; position: absolute; left: 4px; right: 5px; bottom: 0; height: 2px; background: #76b9ed; }
.tb.current { background: #4b5354; }
.tb.current::after { left: 0; right: 0; }
.netstat { margin-left: 392.500px; width: 112px; font-size: 11.200px; line-height: 15px; padding-top: 1px; }
.net-row { display: flex; justify-content: space-between; }
.tray { margin-left: 2px; flex: 1; display: flex; align-items: center; height: 30px; }
.tr { width: 24px; height: 30px; flex: none; display: flex; align-items: center; justify-content: center; }
.tr-ic { width: 16px; height: 16px; }
.num { width: 16px; height: 16px; background: #7dff7d; color: #000; font-size: 13px; font-weight: 700; line-height: 16px; text-align: center; letter-spacing: -.5px; }
.clock { width: 38px; flex: none; font-size: 12px; text-align: center; color: #eee; }
.notif { width: 42px; flex: none; display: flex; justify-content: center; }
.notif-ic { width: 16px; height: 16px; }
.show-desk { flex: 1; height: 30px; margin-left: 8px; border-left: 1px solid #4a5a5c; }

.dialog { position: absolute; left: 409px; top: 140px; width: 548px; height: 481px; background: #e4e4e4; box-shadow: 0 0 10px rgba(0,0,0,.45); display: flex; flex-direction: column; border-radius: 1px; }
.dlg-head { height: 44px; flex: none; background: #d2d2d2; display: flex; align-items: center; justify-content: space-between; padding: 0 18px 0 17px; }
.dlg-title { font-size: 14.600px; font-weight: 700; color: #5f5f5f; }
.dlg-close { width: 14px; height: 14px; margin-top: -2px; }
.dlg-body { flex: 1; min-height: 0; padding: 18px 18px 0 17px; }
.sec { margin: 0; font-size: 14.600px; line-height: 18px; font-weight: 700; color: #1a1a1a; }
.sec2 { margin-top: 29px; }
.row { display: grid; grid-template-columns: 227px 1fr; align-items: center; padding-left: 22px; font-size: 14.600px; color: #303030; }
.row label { white-space: nowrap; }
.r-theme { margin-top: 7px; }
.r-theme label { padding-bottom: 1px; }
.r-scale { margin-top: 4px; }
.r-prim { margin-top: 3px; }
.r-font { margin-top: 7px; }
.r-c1 { margin-top: 5px; }
.r-c2 { margin-top: 4px; }
.r-c2 label { padding-top: 1px; }
.select { display: flex; align-items: center; justify-content: space-between; height: 35px; border: 1px solid #c0c0c0; border-radius: 2px; background: linear-gradient(#f3f3f3, #dedede); padding: 0 10px 0 6px; color: #333; font-size: 14.600px; }
.r-scale .select { height: 36px; }
.s123 { width: 123px; }
.s78 { width: 78px; }
.chev-d { width: 12px; height: 12px; color: #444; }
.full { width: 100%; }
.mono { height: 30px; font: 12px "DejaVu Sans Mono", monospace; padding: 2px 9px 0 6px; }
.font-meta { margin: 2px 0 0 118px; height: 34px; display: flex; background: #fff; border: 1px solid #cfcfcf; border-radius: 3px; font-size: 14.600px; }
.fm-size { width: 45px; line-height: 34px; padding-left: 4px; }
.fm-btn { line-height: 34px; background: linear-gradient(#ececec, #dedede); border-left: 1px solid #c8c8c8; color: #333; }
.fm-b { width: 26px; padding-left: 6px; }
.fm-i { width: 27px; padding-left: 7px; border-right: 1px solid #c8c8c8; }
.fm-blank { flex: 1; }
.color { display: flex; height: 36px; }
.r-c1 .color { height: 34px; }
.r-c2 .color { height: 35px; }
.color-val { width: 231px; line-height: 34px; padding-left: 3px; font-size: 15.500px; border: 1px solid #cfcfcf; border-radius: 3px 0 0 3px; color: #fff; }
.c-cyan { background: #33ffff; border-color: #2fd6d6; }
.c-white { background: #fff; color: #bbb; line-height: 32px; }
.c-dark { background: #333; border-color: #333; font-size: 14.600px; }
.color-btn { flex: 1; display: flex; align-items: center; justify-content: center; background: linear-gradient(#f3f3f3, #dedede); border: 1px solid #cfcfcf; border-left: 0; border-radius: 0 2px 2px 0; padding-left: 1px; }
.pal { width: 22px; height: 22px; fill: #3f3f3f; }
.dlg-foot { height: 61px; flex: none; background: #e9e9e9; display: flex; align-items: flex-start; padding: 13px 13px 0; gap: 8px; }
.foot-gap { flex: 1; }
.btn { height: 35px; border: 1px solid #c4c4c4; border-radius: 2px; background: linear-gradient(#f4f4f4, #e0e0e0); font: 14.600px Roboto, sans-serif; color: #333; padding: 1px 0 0; }
.b-restore { width: 131px; }
.b-cancel { width: 88px; }
.b-apply { width: 88px; font-weight: 700; color: #1a1a1a; border-color: #7fb0d8; }
```
